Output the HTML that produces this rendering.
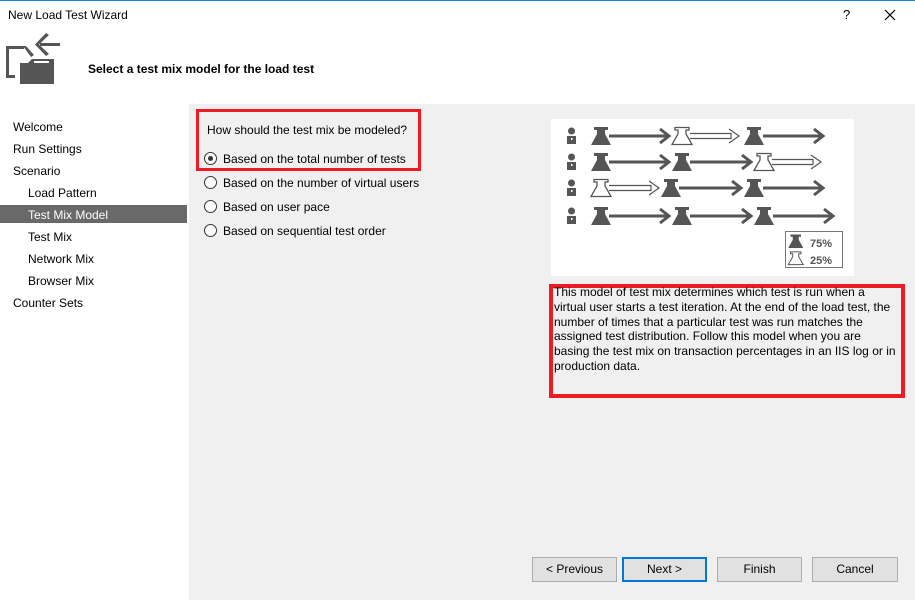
<!DOCTYPE html>
<html><head><meta charset="utf-8"><style>
*{margin:0;padding:0;box-sizing:border-box}
body{width:915px;height:600px;position:relative;background:#fff;font-family:"Liberation Sans",sans-serif;font-size:12px;color:#000;overflow:hidden}
.a{position:absolute;white-space:nowrap}
.nav{font-size:12px}
.radio{position:absolute;width:13px;height:13px;border:1px solid #333;border-radius:50%;background:#fff}
.btn{position:absolute;top:557px;height:25px;border:1px solid #adadad;background:#e1e1e1;text-align:center;line-height:23px;font-size:12px}
</style></head><body>
<div class="a" style="left:0;top:0;width:915px;height:1px;background:#1883d7"></div>
<div class="a" style="left:8px;top:8px;font-size:12px">New Load Test Wizard</div>
<div class="a" style="left:843px;top:7px;font-size:13px">?</div>
<svg class="a" style="left:884px;top:9px" width="12" height="12"><path d="M1 1L11 11M11 1L1 11" stroke="#000" stroke-width="1.2"/></svg>
<svg class="a" style="left:0;top:30px" width="70" height="60">
<g fill="#555">
<rect x="40" y="13" width="20" height="3"/>
<path d="M46 3L49 5L39 14.5L49 24L46 26L35 14.5Z"/>
<rect x="6" y="16" width="3" height="32"/><rect x="6" y="16" width="18" height="3"/><rect x="6" y="45" width="9" height="3"/>
<path d="M23 16L26 16L34 25L31 27Z"/>
<rect x="20" y="33" width="34" height="21"/>
<path d="M20 33L28 33L32 29L54 29L54 33Z"/>
</g>
<rect x="34" y="31" width="15" height="2" fill="#fff"/>
</svg>
<div class="a" style="left:88px;top:62px;font-size:12px;font-weight:bold">Select a test mix model for the load test</div>

<div class="a" style="left:189px;top:104px;width:726px;height:496px;background:#f0f0f0"></div>
<div class="a" style="left:0;top:205px;width:187px;height:18px;background:#696969"></div>
<div class="a nav" style="left:13px;top:120px">Welcome</div>
<div class="a nav" style="left:13px;top:142px">Run Settings</div>
<div class="a nav" style="left:13px;top:164px">Scenario</div>
<div class="a nav" style="left:28px;top:186px">Load Pattern</div>
<div class="a nav" style="left:28px;top:208px;color:#fff">Test Mix Model</div>
<div class="a nav" style="left:28px;top:230px">Test Mix</div>
<div class="a nav" style="left:28px;top:252px">Network Mix</div>
<div class="a nav" style="left:28px;top:274px">Browser Mix</div>
<div class="a nav" style="left:13px;top:296px">Counter Sets</div>

<div class="a" style="left:196px;top:109px;width:225px;height:62px;border:3px solid #ed1c24"></div>
<div class="a" style="left:207px;top:123px">How should the test mix be modeled?</div>
<div class="radio" style="left:204px;top:152px"><div style="position:absolute;left:3px;top:3px;width:5px;height:5px;border-radius:50%;background:#333"></div></div>
<div class="a" style="left:223px;top:152px">Based on the total number of tests</div>
<div class="radio" style="left:204px;top:176px"></div>
<div class="a" style="left:223px;top:176px">Based on the number of virtual users</div>
<div class="radio" style="left:204px;top:200px"></div>
<div class="a" style="left:223px;top:200px">Based on user pace</div>
<div class="radio" style="left:204px;top:224px"></div>
<div class="a" style="left:223px;top:224px">Based on sequential test order</div>

<svg class="a" style="left:551px;top:119px;background:#fff" width="303" height="157">
<defs>
<g id="p"><circle cx="4.5" cy="-6" r="3.5" fill="#555"/><rect x="0" y="-1" width="9" height="8" fill="#555"/><rect x="4" y="1" width="1.5" height="2" fill="#fff"/></g>
<path id="fs" d="M2 -10H16V-7H13V-3L19 8H-1L5 -3V-7H2Z" fill="#555"/>
<path id="fh" d="M2 -9.5H16V-7H13V-3L19 7.5H-1L5 -3V-7H2Z" fill="#fff" stroke="#555" stroke-width="1.3"/>
</defs>
<g stroke="#555" stroke-width="3" fill="none">
<path d="M58 17H118M109 10L118 17L109 24"/>
<path d="M212 17H272M263 10L272 17L263 24"/>
<path d="M58 43H118M109 36L118 43L109 50"/>
<path d="M139 43H200M191 36L200 43L191 50"/>
<path d="M128 69H190M181 62L190 69L181 76"/>
<path d="M212 69H272M263 62L272 69L263 76"/>
<path d="M58 97H118M109 90L118 97L109 104"/>
<path d="M139 97H200M191 90L200 97L191 104"/>
<path d="M222 97H282M273 90L282 97L273 104"/>
</g>
<g stroke="#555" stroke-width="1.2" fill="none">
<path d="M139 14.5H180V19.5H139M178 10L188 17L178 24"/>
<path d="M221 40.5H262V45.5H221M260 36L270 43L260 50"/>
<path d="M58 66.5H100V71.5H58M98 62L108 69L98 76"/>
</g>
<use href="#p" x="16" y="18"/><use href="#p" x="16" y="44"/><use href="#p" x="16" y="70"/><use href="#p" x="16" y="98"/>
<use href="#fs" x="41" y="18"/><use href="#fh" x="122" y="18"/><use href="#fs" x="194" y="18"/>
<use href="#fs" x="41" y="44"/><use href="#fs" x="122" y="44"/><use href="#fh" x="204" y="44"/>
<use href="#fh" x="41" y="70"/><use href="#fs" x="111" y="70"/><use href="#fs" x="194" y="70"/>
<use href="#fs" x="41" y="98"/><use href="#fs" x="122" y="98"/><use href="#fs" x="204" y="98"/>
<rect x="234.5" y="112.5" width="57" height="36" fill="#fff" stroke="#777"/>
<use href="#fs" transform="translate(238 123) scale(0.75)"/><use href="#fh" transform="translate(238 140) scale(0.75)"/>
<text x="259" y="128" font-family="Liberation Sans" font-size="11" font-weight="bold" fill="#555">75%</text>
<text x="259" y="145" font-family="Liberation Sans" font-size="11" font-weight="bold" fill="#555">25%</text>
</svg>

<div class="a" style="left:549px;top:284px;width:356px;height:114px;border:4px solid #ed1c24"></div>
<div class="a" style="left:554px;top:285px;line-height:14.8px;font-size:12px">This model of test mix determines which test is run when a<br>virtual user starts a test iteration. At the end of the load test, the<br>number of times that a particular test was run matches the<br>assigned test distribution. Follow this model when you are<br>basing the test mix on transaction percentages in an IIS log or in<br>production data.</div>

<div class="btn" style="left:532px;width:85px">&lt; Previous</div>
<div class="btn" style="left:622px;width:85px;border:2px solid #0078d7;line-height:21px">Next &gt;</div>
<div class="btn" style="left:717px;width:85px">Finish</div>
<div class="btn" style="left:812px;width:86px">Cancel</div>
</body></html>
